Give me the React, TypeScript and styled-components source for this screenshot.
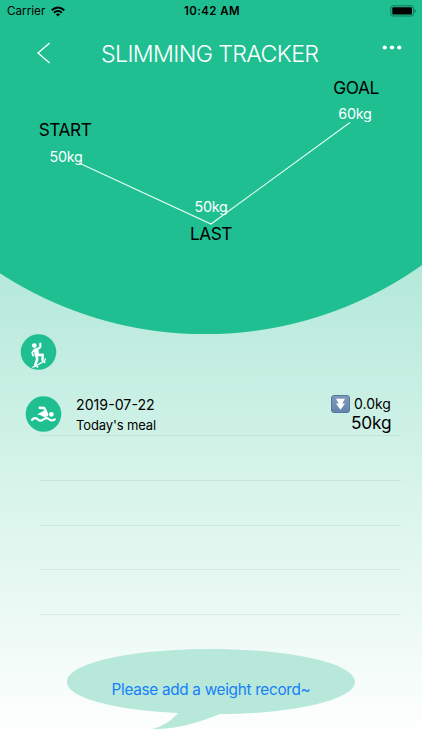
import React from "react";
import styled, { createGlobalStyle } from "styled-components";

const GREEN = "#20bf92";

const GlobalStyle = createGlobalStyle`
  * { box-sizing: border-box; }
  body { margin: 0; font-family: Inter, "Liberation Sans", sans-serif; color: #000; }
`;

const Screen = styled.main`
  width: 422px;
  height: 750px;
  overflow: hidden;
  display: flex;
  flex-direction: column;
  background: linear-gradient(#b0e8d7 240px, #b8eadb 290px, #d8f4eb 490px, #fff 740px);
`;

const Hero = styled.header`
  height: 334px;
  flex: none;
  background: radial-gradient(circle at 205px -41px, ${GREEN} 374.7px, transparent 375.7px);
`;

const StatusBar = styled.div`
  height: 22px;
  display: grid;
  grid-template-columns: 1fr auto 1fr;
  align-items: center;
  padding: 0 5px 0 7px;
`;

const Carrier = styled.div`
  display: flex;
  align-items: center;
  gap: 6px;
`;

const Battery = styled.svg`
  justify-self: end;
`;

const Label = styled.span<{
  $size: number;
  $width: number;
  $weight?: number;
  $spacing?: number;
}>`
  display: block;
  width: ${(p) => p.$width}px;
  font-size: ${(p) => p.$size}px;
  font-weight: ${(p) => p.$weight ?? 400};
  letter-spacing: ${(p) => p.$spacing ?? 0}px;
  line-height: 20px;
  white-space: nowrap;
`;

const NavBar = styled.nav`
  height: 62px;
  display: grid;
  grid-template-columns: 101px 1fr 21px;
  align-items: center;
  padding-right: 19px;
`;

const NavButton = styled.button<{ $inset?: number; $lift?: number }>`
  border: 0;
  padding: 0 0 0 ${(p) => p.$inset ?? 0}px;
  margin: 0 0 ${(p) => p.$lift ?? 0}px;
  background: none;
  display: flex;
`;

const Title = styled.h1`
  margin: 0;
  padding-top: 1px;
  font-size: 23.2px;
  font-weight: 300;
  line-height: 30px;
  letter-spacing: -0.65px;
  color: #fff;
  white-space: nowrap;
`;

const Chart = styled.section`
  position: relative;
  height: 250px;
`;

const ChartLine = styled.svg`
  position: absolute;
  inset: 0;
`;

const Point = styled.div<{ $x: number; $y: number }>`
  position: absolute;
  left: ${(p) => p.$x}px;
  top: ${(p) => p.$y}px;
  transform: translate(-50%, -50%);
  font-size: 17.3px;
  letter-spacing: -0.45px;
  line-height: 20px;
  white-space: nowrap;
`;

const PointValue = styled(Point)`
  font-size: 14.3px;
  letter-spacing: -0.2px;
  color: #fff;
`;

const Category = styled.div`
  height: 54px;
  padding-left: 20px;
`;

const RecordRow = styled.article`
  height: 47px;
  display: flex;
  padding: 7px 31px 0 25px;
`;

const RecordIcon = styled.div`
  padding-top: 1px;
`;

const RecordText = styled.div`
  margin-left: 14px;
  flex: 1;
`;

const RecordValues = styled.div`
  display: flex;
  flex-direction: column;
  align-items: flex-end;
  gap: 1px;
`;

const Change = styled.div`
  display: flex;
  align-items: center;
  gap: 4px;
  height: 17px;
`;

const EmptyRow = styled.div`
  height: 44.8px;
  margin: 0 21px 0 40px;
  border-top: 1px solid rgba(80, 130, 115, 0.11);
`;

const Bubble = styled.button`
  position: relative;
  flex: none;
  width: 288px;
  height: 80px;
  margin: -10px 0 0 67px;
  padding: 16px 0 0;
  border: 0;
  background: none;
  font: 400 15.3px/20px Inter, sans-serif;
  letter-spacing: -0.3px;
  color: #157efb;
`;

const BubbleShape = styled.svg`
  position: absolute;
  inset: 0;
`;

const BubbleText = styled.span`
  position: relative;
  display: block;
  margin-top: -14px;
  white-space: nowrap;
`;

const WifiIcon = () => (
  <svg width="14" height="11" viewBox="0 0 14 11">
    <g fill="none" stroke="#000" strokeWidth="1.9">
      <path d="M.7 4.2Q7 -1.4 13.3 4.2" />
      <path d="M3 6.7Q7 3.2 11 6.7" />
    </g>
    <path d="M4.8 8.3Q7 6.5 9.2 8.3L7 10.6Z" />
  </svg>
);

const SkateIcon = () => (
  <svg width="37" height="37" viewBox="0 0 37 37">
    <circle cx="18.5" cy="18" r="17.8" fill={GREEN} />
    <g fill="none" stroke="#fff" strokeLinecap="round" strokeLinejoin="round">
      <path d="M15 15.8L19 14.3L20.3 12.8V9.5" strokeWidth="2.1" />
      <path d="M14.3 15.7L12.1 18.8L13.1 21.6" strokeWidth="1.7" />
      <path d="M16.2 16.7L16.8 20.7" strokeWidth="4.6" />
      <path d="M17.5 21L22.7 20.7L22.5 25.8M16.4 21.5L17.2 25.5L15.2 31" strokeWidth="2.5" />
      <path d="M12.9 33.2L15.5 32.2L24.7 26.6L25.4 24.9" strokeWidth="1.3" />
    </g>
    <circle cx="14.3" cy="11.6" r="2.4" fill="#fff" />
    <circle cx="17.3" cy="32.8" r="1" fill="#fff" />
    <circle cx="24.5" cy="28.3" r="1" fill="#fff" />
  </svg>
);

const SwimIcon = () => (
  <svg width="37" height="37" viewBox="0 0 37 37">
    <circle cx="18.5" cy="18" r="17.8" fill={GREEN} />
    <g fill="none" stroke="#fff" strokeLinecap="round" strokeLinejoin="round">
      <path d="M7 24Q9.5 20.8 12.7 23.3Q15.8 25.8 18.6 23.3Q21.5 20.8 24.3 23.3Q27 25.5 29.8 23.3" strokeWidth="2.2" />
      <path d="M14.7 11.8L19.2 12L22 17.8" strokeWidth="2.4" />
    </g>
    <path d="M20.2 14L12 18.4Q14.7 18.2 17.2 20.1Q20 22.2 23.2 19.7L21.7 15Z" fill="#fff" />
    <circle cx="26.3" cy="18.3" r="2.4" fill="#fff" />
  </svg>
);

const DownIcon = () => (
  <svg width="19" height="18" viewBox="0 0 19 18">
    <defs>
      <linearGradient id="key" x1="0" y1="0" x2="0" y2="1">
        <stop stopColor="#7f9bbb" />
        <stop offset="1" stopColor="#6683ad" />
      </linearGradient>
    </defs>
    <rect x=".5" y=".5" width="18" height="17" rx="2.5" fill="url(#key)" stroke="#58779e" />
    <path d="M5 3.8H14L11.3 8.4H14L9.5 14.7L5 8.4H7.7Z" fill="#fff" />
  </svg>
);

export default function App() {
  return (
    <Screen>
      <GlobalStyle />
      <Hero>
        <StatusBar>
          <Carrier>
            <Label $size={11.7} $width={38}>Carrier</Label>
            <WifiIcon />
          </Carrier>
          <Label $size={11.5} $width={56} $weight={600} $spacing={0.4}>10:42 AM</Label>
          <Battery width="27" height="12" viewBox="0 0 27 12">
            <rect x=".8" y=".8" width="22.7" height="10.2" rx="2.4" fill="none" stroke="#137358" />
            <rect x="2.3" y="2.3" width="19.7" height="7.3" rx="1" />
            <path d="M24.7 4.1Q27.3 5.9 24.7 7.7Z" fill="#137358" />
          </Battery>
        </StatusBar>
        <NavBar>
          <NavButton $inset={37} aria-label="Back">
            <svg width="14" height="22" viewBox="0 0 14 22">
              <path d="M12.6 1L1 11L12.6 21" fill="none" stroke="#fff" strokeWidth="1.3" />
            </svg>
          </NavButton>
          <Title>SLIMMING TRACKER</Title>
          <NavButton $lift={12} aria-label="More">
            <svg width="20" height="5" viewBox="0 0 20 5">
              <circle cx="2.7" cy="2.5" r="2.1" fill="#fff" />
              <circle cx="10" cy="2.5" r="2.1" fill="#fff" />
              <circle cx="17.3" cy="2.5" r="2.1" fill="#fff" />
            </svg>
          </NavButton>
        </NavBar>
        <Chart>
          <ChartLine width="422" height="250" viewBox="0 0 422 250">
            <polyline points="79,79 211,140 350,38.5" fill="none" stroke="#e5fff6" strokeWidth="1.1" />
          </ChartLine>
          <Point $x={65} $y={46}>START</Point>
          <PointValue $x={66} $y={73}>50kg</PointValue>
          <PointValue $x={211} $y={123}>50kg</PointValue>
          <Point $x={211} $y={150}>LAST</Point>
          <Point $x={356} $y={4}>GOAL</Point>
          <PointValue $x={355} $y={30}>60kg</PointValue>
        </Chart>
      </Hero>
      <Category><SkateIcon /></Category>
      <RecordRow>
        <RecordIcon><SwimIcon /></RecordIcon>
        <RecordText>
          <Label $size={14.2} $width={80}>2019-07-22</Label>
          <Label $size={13} $width={80} $spacing={-0.12}>Today's meal</Label>
        </RecordText>
        <RecordValues>
          <Change>
            <DownIcon />
            <Label $size={14} $width={37}>0.0kg</Label>
          </Change>
          <Label $size={17.3} $width={40} $spacing={-0.2}>50kg</Label>
        </RecordValues>
      </RecordRow>
      <EmptyRow />
      <EmptyRow />
      <EmptyRow />
      <EmptyRow />
      <EmptyRow />
      <Bubble>
        <BubbleShape width="288" height="80" viewBox="0 0 288 80">
          <path d="M0 33C0 14 64 0 144 0S288 14 288 33C288 51 224 65 153 65Q114 81 85 80Q101 76 111 64C48 61 0 49 0 33Z" fill="#b8e8da" />
        </BubbleShape>
        <BubbleText>Please add a weight record~</BubbleText>
      </Bubble>
    </Screen>
  );
}
